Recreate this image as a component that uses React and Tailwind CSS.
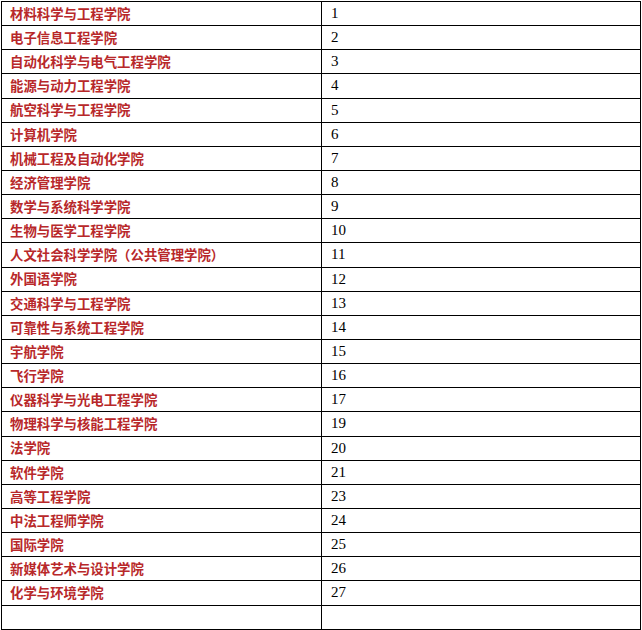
const ROWS = [
  ['材料科学与工程学院', '1'],
  ['电子信息工程学院', '2'],
  ['自动化科学与电气工程学院', '3'],
  ['能源与动力工程学院', '4'],
  ['航空科学与工程学院', '5'],
  ['计算机学院', '6'],
  ['机械工程及自动化学院', '7'],
  ['经济管理学院', '8'],
  ['数学与系统科学学院', '9'],
  ['生物与医学工程学院', '10'],
  ['人文社会科学学院（公共管理学院）', '11'],
  ['外国语学院', '12'],
  ['交通科学与工程学院', '13'],
  ['可靠性与系统工程学院', '14'],
  ['宇航学院', '15'],
  ['飞行学院', '16'],
  ['仪器科学与光电工程学院', '17'],
  ['物理科学与核能工程学院', '19'],
  ['法学院', '20'],
  ['软件学院', '21'],
  ['高等工程学院', '23'],
  ['中法工程师学院', '24'],
  ['国际学院', '25'],
  ['新媒体艺术与设计学院', '26'],
  ['化学与环境学院', '27'],
  ['', ''],
]

export default function App() {
  return (
    <div className="w-[642px] h-[630px] bg-white pt-px pl-px overflow-hidden">
      <div className="w-[640px] border-t border-l border-black">
        {ROWS.map(([name, num], i) => (
          <div key={i} className="flex h-[24.15px] border-b border-black">
            <div
              className="w-[320px] shrink-0 border-r border-black pl-[8px] flex items-center text-[13.4px] font-bold text-[#b8282a] leading-none whitespace-nowrap"
              style={{ fontFamily: '"Noto Sans CJK SC", sans-serif' }}
            >
              {name}
            </div>
            <div
              className="flex-1 border-r border-black pl-[9px] flex items-center text-[15px] text-black leading-none"
              style={{ fontFamily: '"Liberation Serif", serif' }}
            >
              {num}
            </div>
          </div>
        ))}
      </div>
    </div>
  )
}
